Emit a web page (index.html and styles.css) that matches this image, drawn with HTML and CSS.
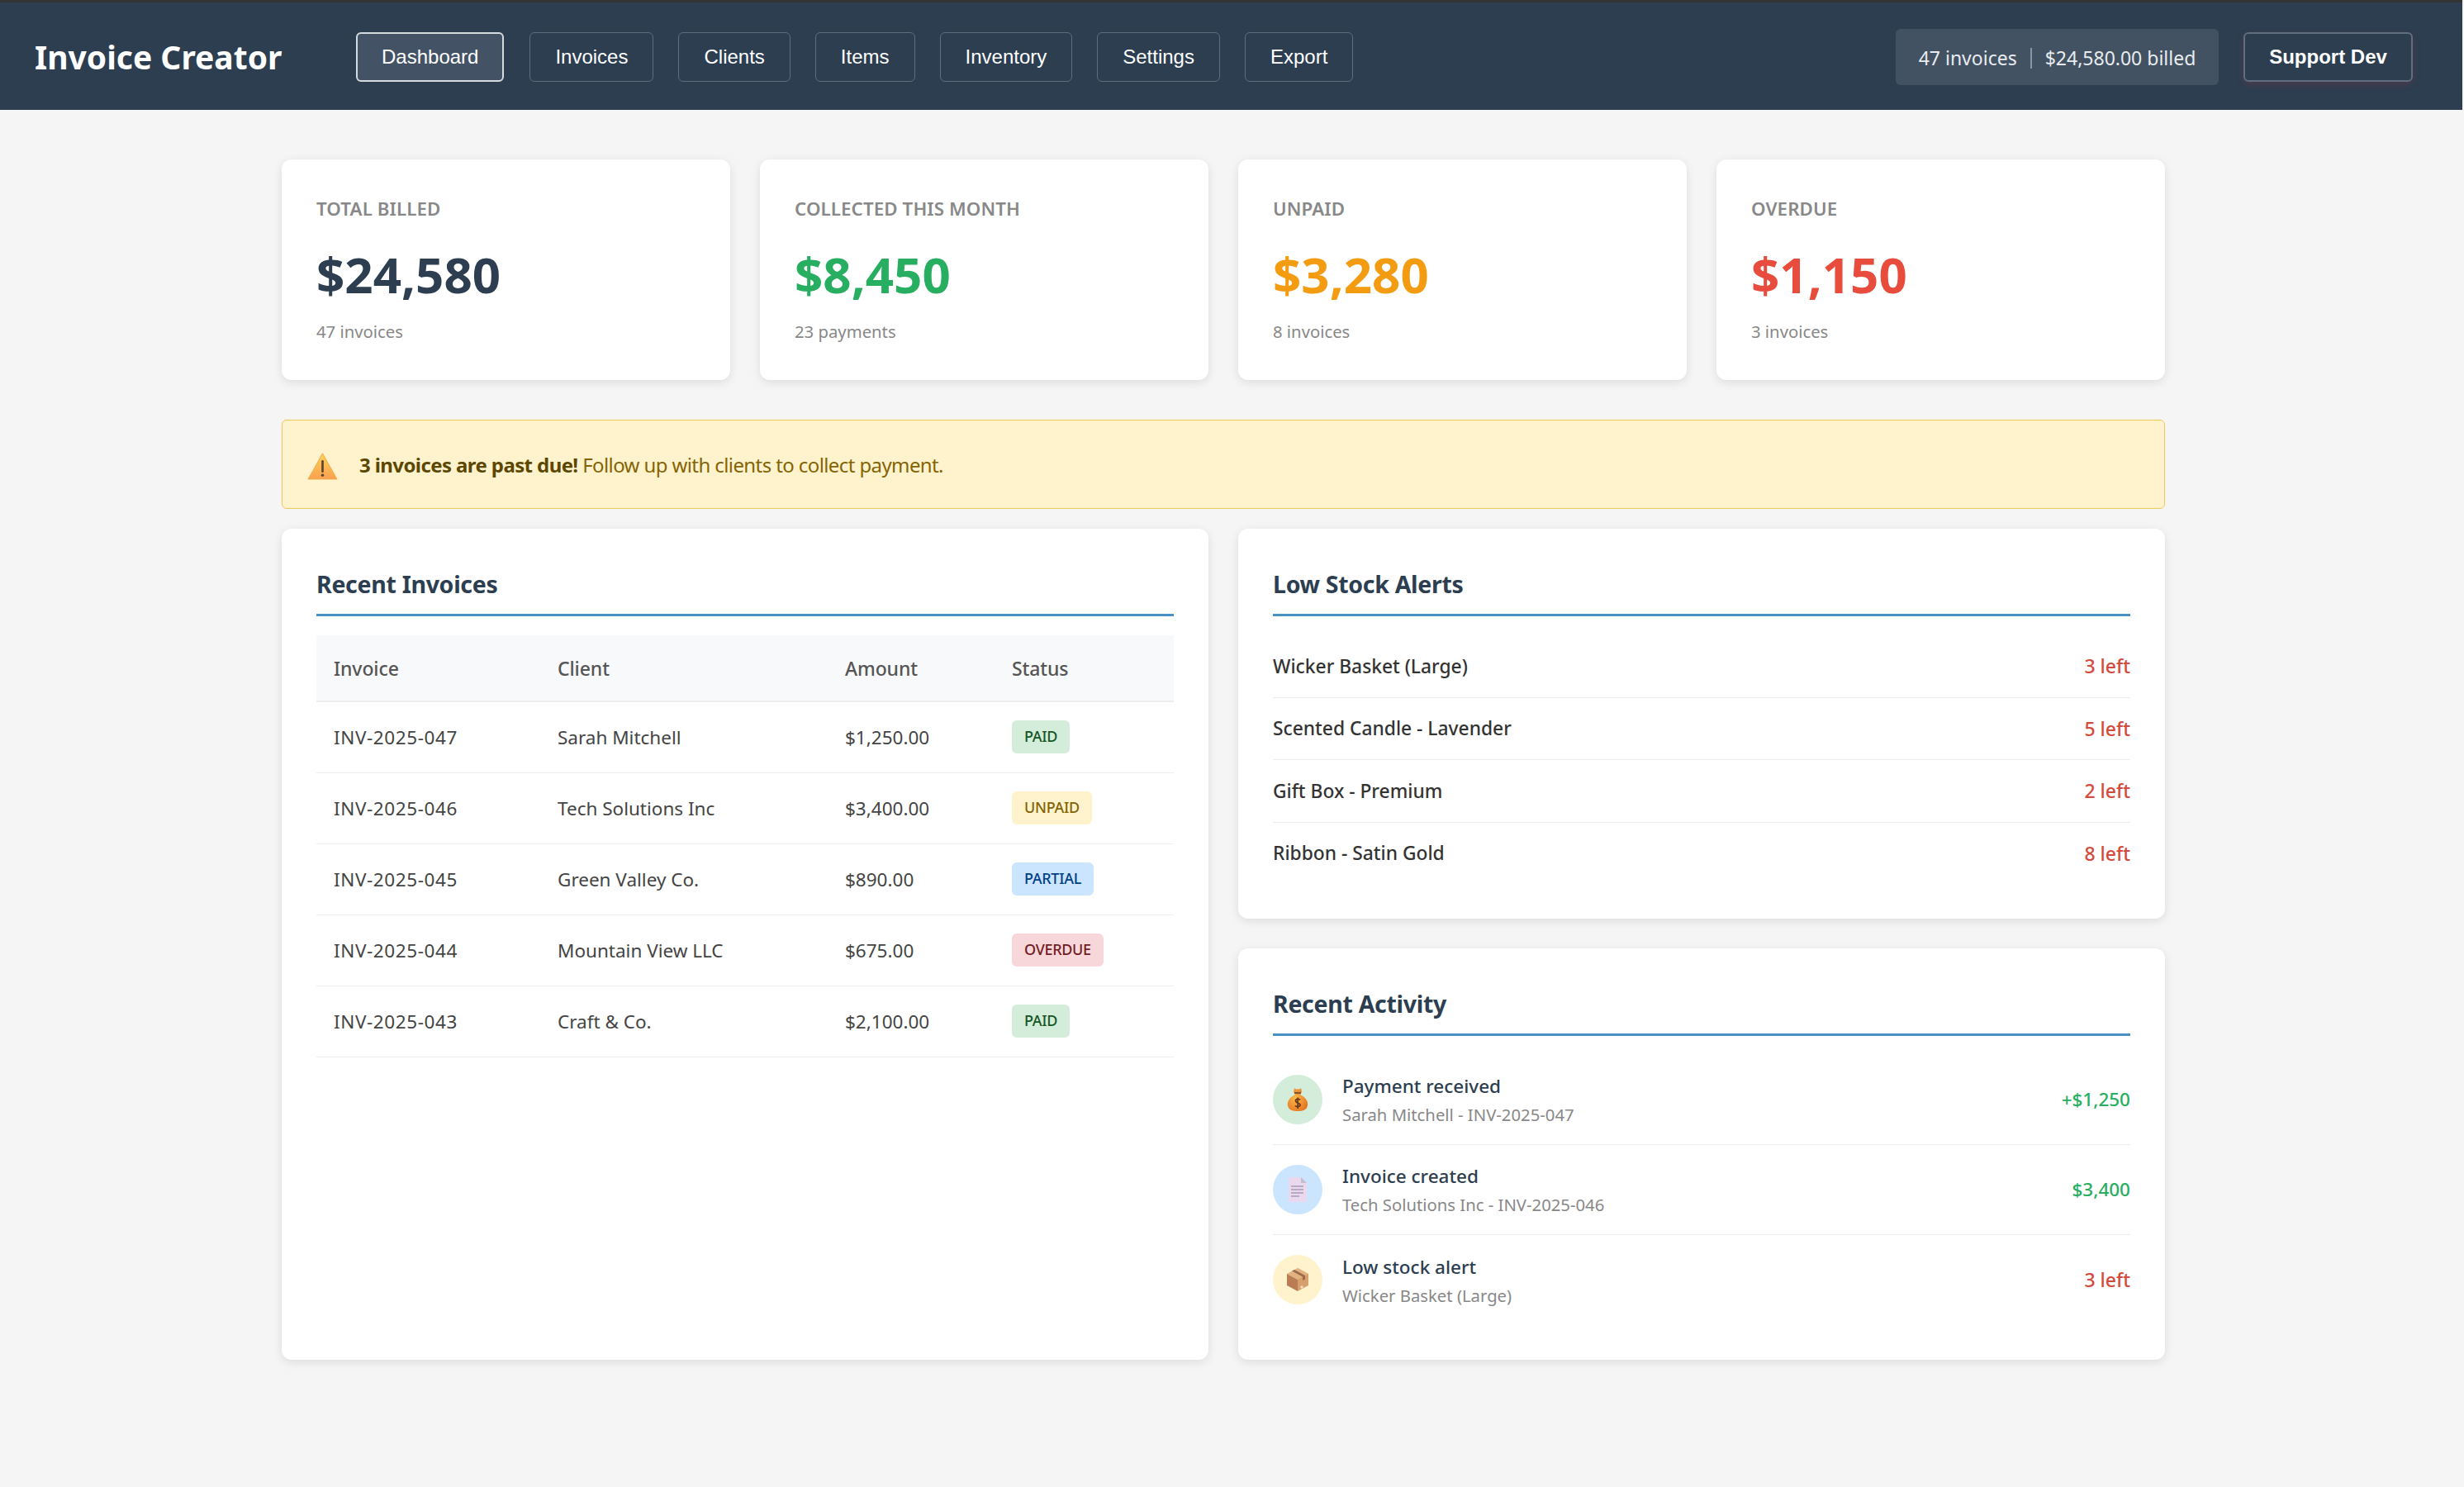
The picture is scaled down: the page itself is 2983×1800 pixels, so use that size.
FILE: index.html
```html
<!DOCTYPE html>
<html lang="en">
<head>
<meta charset="utf-8">
<title>Invoice Creator</title>
<link rel="stylesheet" href="styles.css">
</head>
<body>
<header class="topbar">
  <h1 class="brand">Invoice Creator</h1>
  <nav class="nav">
    <a class="nav-btn active">Dashboard</a>
    <a class="nav-btn">Invoices</a>
    <a class="nav-btn">Clients</a>
    <a class="nav-btn">Items</a>
    <a class="nav-btn">Inventory</a>
    <a class="nav-btn">Settings</a>
    <a class="nav-btn">Export</a>
  </nav>
  <div class="summary"><span>47 invoices</span><i class="pipe"></i><span>$24,580.00 billed</span></div>
  <a class="support">Support Dev</a>
</header>
<main class="page">
  <section class="stats">
    <div class="stat"><div class="stat-label">TOTAL BILLED</div><div class="stat-value navy">$24,580</div><div class="stat-sub">47 invoices</div></div>
    <div class="stat"><div class="stat-label">COLLECTED THIS MONTH</div><div class="stat-value green">$8,450</div><div class="stat-sub">23 payments</div></div>
    <div class="stat"><div class="stat-label">UNPAID</div><div class="stat-value orange">$3,280</div><div class="stat-sub">8 invoices</div></div>
    <div class="stat"><div class="stat-label">OVERDUE</div><div class="stat-value red">$1,150</div><div class="stat-sub">3 invoices</div></div>
  </section>
  <section class="alert">
    <svg class="alert-icon" viewBox="0 0 36 32" aria-hidden="true">
      <defs><linearGradient id="warn" x1="0" y1="0" x2="0" y2="1"><stop offset="0" stop-color="#fbd35a"/><stop offset="1" stop-color="#fb9f50"/></linearGradient></defs>
      <path d="M18 1 L35 31 H1 Z" fill="url(#warn)" stroke="#eeb04c" stroke-width="1" stroke-linejoin="round"/>
      <path d="M18 10 V22" stroke="#5d4630" stroke-width="2.6" stroke-linecap="round"/>
      <circle cx="18" cy="26.5" r="1.7" fill="#5d4630"/>
    </svg>
    <p class="alert-text"><strong>3 invoices are past due!</strong> Follow up with clients to collect payment.</p>
  </section>
  <section class="columns">
    <article class="panel">
      <h2 class="panel-title">Recent Invoices</h2>
      <table class="table">
        <thead><tr><th class="c1">Invoice</th><th class="c2">Client</th><th class="c3">Amount</th><th>Status</th></tr></thead>
        <tbody>
          <tr><td class="inv">INV-2025-047</td><td>Sarah Mitchell</td><td>$1,250.00</td><td><span class="badge paid">PAID</span></td></tr>
          <tr><td class="inv">INV-2025-046</td><td>Tech Solutions Inc</td><td>$3,400.00</td><td><span class="badge unpaid">UNPAID</span></td></tr>
          <tr><td class="inv">INV-2025-045</td><td>Green Valley Co.</td><td>$890.00</td><td><span class="badge partial">PARTIAL</span></td></tr>
          <tr><td class="inv">INV-2025-044</td><td>Mountain View LLC</td><td>$675.00</td><td><span class="badge overdue">OVERDUE</span></td></tr>
          <tr><td class="inv">INV-2025-043</td><td>Craft &amp; Co.</td><td>$2,100.00</td><td><span class="badge paid">PAID</span></td></tr>
        </tbody>
      </table>
    </article>
    <div class="side">
      <article class="panel">
        <h2 class="panel-title">Low Stock Alerts</h2>
        <ul class="stock">
          <li><span>Wicker Basket (Large)</span><b>3 left</b></li>
          <li><span>Scented Candle - Lavender</span><b>5 left</b></li>
          <li><span>Gift Box - Premium</span><b>2 left</b></li>
          <li><span>Ribbon - Satin Gold</span><b>8 left</b></li>
        </ul>
      </article>
      <article class="panel">
        <h2 class="panel-title">Recent Activity</h2>
        <ul class="activity">
          <li>
            <div class="act-icon bg-green">
              <svg class="ico-bag" viewBox="0 0 26 30" aria-hidden="true">
                <defs><radialGradient id="bag" cx=".4" cy=".45" r=".7"><stop offset="0" stop-color="#fdb94a"/><stop offset="1" stop-color="#e2701f"/></radialGradient></defs>
                <path d="M9 1 C10 3 16 3 17 1 L18 6 L16 9 C22 12 26 17 25 22 C24 28 19 29 13 29 C7 29 2 28 1 22 C0 17 4 12 10 9 L8 6 Z" fill="url(#bag)"/>
                <path d="M9 7 H17" stroke="#8a5326" stroke-width="2.2"/>
                <path d="M16 15.5 C15 13.8 10.5 14 10.5 16.6 C10.5 19.6 16 18.6 16 21.6 C16 24 11 24.2 10 22.4 M13.2 12.5 V26" fill="none" stroke="#6e3a1c" stroke-width="1.8"/>
              </svg>
            </div>
            <div class="act-body"><div class="act-title">Payment received</div><div class="act-sub">Sarah Mitchell - INV-2025-047</div></div>
            <b class="amt green">+$1,250</b>
          </li>
          <li>
            <div class="act-icon bg-blue">
              <svg class="ico-doc" viewBox="0 0 24 32" aria-hidden="true">
                <path d="M1 1 H16 L23 8 V31 H1 Z" fill="#ead9ee"/>
                <path d="M16 1 L23 8 H16 Z" fill="#c5bdd0"/>
                <path d="M4 12 H19 M4 16 H19 M4 20 H19 M4 24 H14" stroke="#a69cb5" stroke-width="1.4"/>
              </svg>
            </div>
            <div class="act-body"><div class="act-title">Invoice created</div><div class="act-sub">Tech Solutions Inc - INV-2025-046</div></div>
            <b class="amt green">$3,400</b>
          </li>
          <li>
            <div class="act-icon bg-yellow">
              <svg class="ico-box" viewBox="0 0 28 30" aria-hidden="true">
                <path d="M14 1 L27 8 V22 L14 29 Z" fill="#d69f6c"/>
                <path d="M1 8 L14 15 L27 8 L14 1 Z" fill="#e2b280"/>
                <path d="M14 15 V29 L1 22 V8 Z" fill="#b97c55"/>
                <path d="M7 4.5 L20 11.5 V16 L23 14.5 V10 L10 3 Z" fill="#9c6a48"/>
                <circle cx="19" cy="24" r="1.8" fill="#f1d9c2"/>
              </svg>
            </div>
            <div class="act-body"><div class="act-title">Low stock alert</div><div class="act-sub">Wicker Basket (Large)</div></div>
            <b class="amt red-soft">3 left</b>
          </li>
        </ul>
      </article>
    </div>
  </section>
</main>
</body>
</html>
```
FILE: styles.css
```css
* { box-sizing: border-box; }
html, body { margin: 0; padding: 0; }
body { background: #f5f5f5; font-family: "Noto Sans", "Open Sans", sans-serif; color: #333; min-height: 1800px; }

.topbar { height: 133px; margin-right: 2px; background: #2c3e50; border-top: 3px solid #333; display: flex; align-items: center; padding: 2px 60px 0 42px; color: #fff; }
.brand { margin: 0 90px 2px 0; width: 299px; font-size: 39px; font-weight: 700; white-space: nowrap; line-height: 1; }
.nav { display: flex; gap: 30px; flex: 1; }
.nav-btn { height: 60px; padding: 0 30px; display: flex; align-items: center; border: 1px solid #5f6e7d; border-radius: 6px; font: 24px "Liberation Sans", Arial, sans-serif; color: #fff; }
.nav-btn.active { background: #435365; border: 2px solid #d5dade; padding: 0 29px; margin-right: 1px; }
.summary { width: 391px; height: 68px; display: flex; align-items: center; justify-content: center; gap: 16px; background: #435263; border-radius: 6px; font-size: 23px; color: #e8ecef; margin-right: 30px; padding-top: 2px; }
.pipe { width: 2px; height: 25px; background: #8996a3; }
.support { width: 205px; height: 60px; display: flex; align-items: center; justify-content: center; border: 2px solid #616e7e; border-radius: 6px; font: 700 24px "Liberation Sans", Arial, sans-serif; color: #fff; box-shadow: 0 3px 8px rgba(160, 50, 70, .3); }

.page { width: 2280px; margin: 60px 0 0 341px; }
.stats { display: grid; grid-template-columns: repeat(4, 1fr); gap: 36px; }
.stat, .panel { background: #fff; border-radius: 12px; box-shadow: 0 3px 12px rgba(0, 0, 0, .1); }
.stat { height: 267px; padding: 45px 42px 0; }
.stat-label { font-size: 22.3px; font-weight: 600; line-height: 30px; color: #888; letter-spacing: 0.1px; }
.stat-value { font-size: 60px; font-weight: 700; line-height: 82px; margin-top: 23px; }
.stat-sub { font-size: 20.3px; line-height: 27px; margin-top: 15px; color: #888; }
.navy { color: #2c3e50; }
.green { color: #27ae60; }
.orange { color: #f39c12; }
.red { color: #e74c3c; }

.alert { height: 108px; margin-top: 48px; background: #fff3cd; border: 1px solid #f0c75a; border-radius: 6px; display: flex; align-items: center; padding: 0 30px; gap: 26px; color: #856404; font-size: 24px; letter-spacing: -0.6px; }
.alert-icon { width: 37px; height: 33px; flex: none; margin-top: 4px; }
.alert-text { margin: 0; }
.alert-text strong { color: #5c4700; font-weight: 700; }

.columns { display: grid; grid-template-columns: 1fr 1fr; gap: 36px; margin-top: 24px; }
.side { display: flex; flex-direction: column; gap: 36px; }
.panel { padding: 42px; }
.panel-title { margin: 0 0 23px; height: 64px; font-size: 28.5px; font-weight: 700; line-height: 51px; color: #2c3e50; border-bottom: 3px solid #4a90c2; letter-spacing: -0.3px; }

.table { width: 100%; border-collapse: collapse; font-size: 22.5px; }
.table th { background: #f8f9fa; height: 80px; text-align: left; padding: 0 21px; font-size: 23px; font-weight: 500; color: #555; border-bottom: 2px solid #eee; letter-spacing: -0.1px; }
.table th.c1 { width: 271px; }
.table th.c2 { width: 348px; }
.table th.c3 { width: 202px; }
.table td { height: 86px; padding: 0 21px; border-bottom: 1px solid #eee; color: #444; }
.table td.inv { letter-spacing: 0.6px; }
.badge { display: inline-block; height: 40px; padding: 0 15px; border-radius: 6px; font-size: 18px; font-weight: 500; line-height: 39px; letter-spacing: -0.3px; vertical-align: middle; }
.paid { background: #d4edda; color: #155724; }
.unpaid { background: #fff3cd; color: #856404; }
.partial { background: #cce5ff; color: #004085; }
.overdue { background: #f8d7da; color: #721c24; }

.stock { list-style: none; margin: 0; padding: 0; }
.stock li { height: 75.5px; display: flex; align-items: center; justify-content: space-between; border-bottom: 1px solid #eee; font-size: 22.8px; font-weight: 500; color: #333; }
.stock li:last-child { border-bottom: 0; height: 74px; }
.stock b { font-size: 23px; font-weight: 500; color: #d44a3c; }

.activity { list-style: none; margin: 0; padding: 0; }
.activity li { height: 109px; display: flex; align-items: center; gap: 24px; border-bottom: 1px solid #eee; }
.activity li:last-child { border-bottom: 0; }
.act-icon { width: 60px; height: 60px; border-radius: 50%; display: flex; align-items: center; justify-content: center; flex: none; }
.ico-bag { width: 26px; height: 30px; }
.ico-doc { width: 24px; height: 32px; }
.ico-box { width: 28px; height: 30px; }
.bg-green { background: #d4edda; }
.bg-blue { background: #cce5ff; }
.bg-yellow { background: #fff3cd; }
.act-body { flex: 1; padding-top: 2px; }
.act-title { font-size: 22.5px; font-weight: 500; color: #2c3e50; line-height: 30px; }
.act-sub { font-size: 20.3px; color: #888; line-height: 27px; margin-top: 6px; }
.amt { font-size: 22.5px; font-weight: 500; }
.red-soft { font-size: 23px; color: #d44a3c; }
```
